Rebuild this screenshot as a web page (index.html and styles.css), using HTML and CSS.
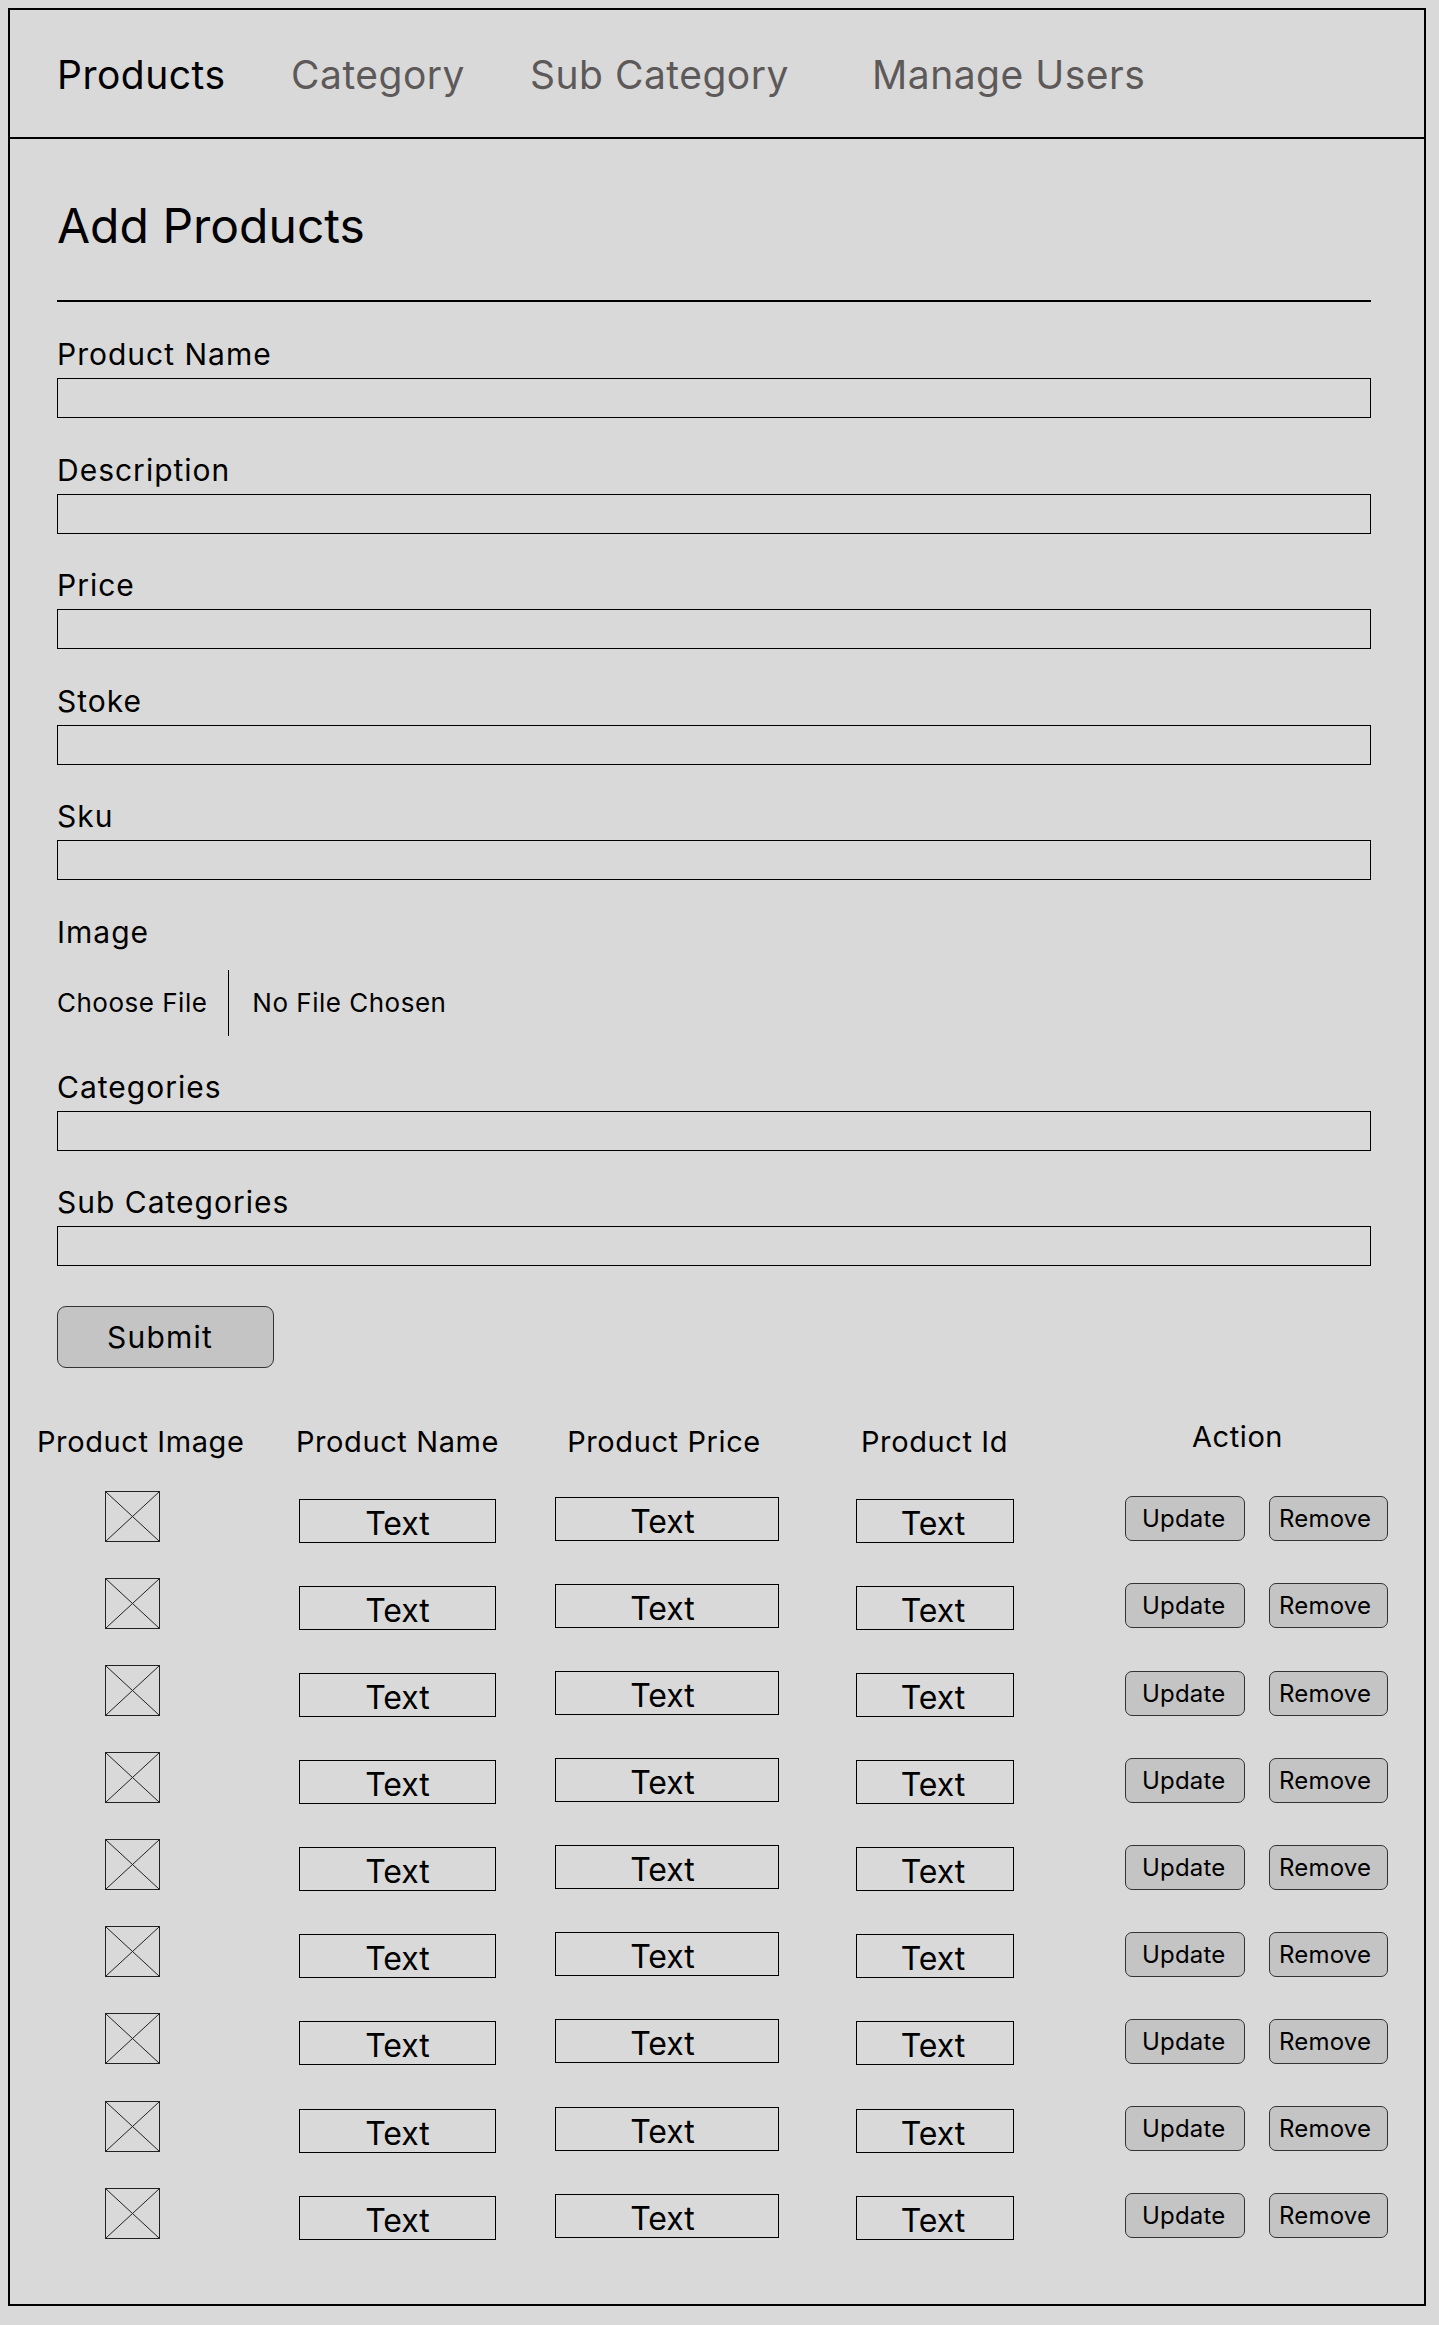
FILE: index.html
```html
<!DOCTYPE html>
<html lang="en">
<head>
<meta charset="utf-8">
<title>Add Products</title>
<link rel="stylesheet" href="styles.css">
</head>
<body>
<div class="frame">
  <nav class="nav">
    <a class="nav-item active">Products</a>
    <a class="nav-item">Category</a>
    <a class="nav-item">Sub Category</a>
    <a class="nav-item">Manage Users</a>
  </nav>

  <section class="form-section">
    <h1 class="title">Add Products</h1>
    <hr class="rule">
    <div class="field"><div class="label">Product Name</div><div class="input"></div></div>
    <div class="field"><div class="label">Description</div><div class="input"></div></div>
    <div class="field"><div class="label">Price</div><div class="input"></div></div>
    <div class="field"><div class="label">Stoke</div><div class="input"></div></div>
    <div class="field"><div class="label">Sku</div><div class="input"></div></div>
    <div class="field field-file">
      <div class="label">Image</div>
      <div class="file">
        <span class="file-btn">Choose File</span>
        <span class="file-sep"></span>
        <span class="file-name">No File Chosen</span>
      </div>
    </div>
    <div class="field"><div class="label">Categories</div><div class="input"></div></div>
    <div class="field"><div class="label">Sub Categories</div><div class="input"></div></div>
    <button class="submit">Submit</button>
  </section>

  <section class="table">
    <div class="row head">
      <div class="th">Product Image</div>
      <div class="th">Product Name</div>
      <div class="th">Product Price</div>
      <div class="th">Product Id</div>
      <div class="th th-action">Action</div>
    </div>
    <div class="row">
      <svg class="thumb" width="55" height="51" viewBox="0 0 55 51"><rect x="0.5" y="0.5" width="54" height="50" fill="none" stroke="#222"/><path d="M1 1L54 50M54 1L1 50" stroke="#222" stroke-width="1"/></svg>
      <div class="box box-name">Text</div>
      <div class="box box-price">Text</div>
      <div class="box box-id">Text</div>
      <div class="actions"><button class="btn btn-update">Update</button><button class="btn btn-remove">Remove</button></div>
    </div>
    <div class="row">
      <svg class="thumb" width="55" height="51" viewBox="0 0 55 51"><rect x="0.5" y="0.5" width="54" height="50" fill="none" stroke="#222"/><path d="M1 1L54 50M54 1L1 50" stroke="#222" stroke-width="1"/></svg>
      <div class="box box-name">Text</div>
      <div class="box box-price">Text</div>
      <div class="box box-id">Text</div>
      <div class="actions"><button class="btn btn-update">Update</button><button class="btn btn-remove">Remove</button></div>
    </div>
    <div class="row">
      <svg class="thumb" width="55" height="51" viewBox="0 0 55 51"><rect x="0.5" y="0.5" width="54" height="50" fill="none" stroke="#222"/><path d="M1 1L54 50M54 1L1 50" stroke="#222" stroke-width="1"/></svg>
      <div class="box box-name">Text</div>
      <div class="box box-price">Text</div>
      <div class="box box-id">Text</div>
      <div class="actions"><button class="btn btn-update">Update</button><button class="btn btn-remove">Remove</button></div>
    </div>
    <div class="row">
      <svg class="thumb" width="55" height="51" viewBox="0 0 55 51"><rect x="0.5" y="0.5" width="54" height="50" fill="none" stroke="#222"/><path d="M1 1L54 50M54 1L1 50" stroke="#222" stroke-width="1"/></svg>
      <div class="box box-name">Text</div>
      <div class="box box-price">Text</div>
      <div class="box box-id">Text</div>
      <div class="actions"><button class="btn btn-update">Update</button><button class="btn btn-remove">Remove</button></div>
    </div>
    <div class="row">
      <svg class="thumb" width="55" height="51" viewBox="0 0 55 51"><rect x="0.5" y="0.5" width="54" height="50" fill="none" stroke="#222"/><path d="M1 1L54 50M54 1L1 50" stroke="#222" stroke-width="1"/></svg>
      <div class="box box-name">Text</div>
      <div class="box box-price">Text</div>
      <div class="box box-id">Text</div>
      <div class="actions"><button class="btn btn-update">Update</button><button class="btn btn-remove">Remove</button></div>
    </div>
    <div class="row">
      <svg class="thumb" width="55" height="51" viewBox="0 0 55 51"><rect x="0.5" y="0.5" width="54" height="50" fill="none" stroke="#222"/><path d="M1 1L54 50M54 1L1 50" stroke="#222" stroke-width="1"/></svg>
      <div class="box box-name">Text</div>
      <div class="box box-price">Text</div>
      <div class="box box-id">Text</div>
      <div class="actions"><button class="btn btn-update">Update</button><button class="btn btn-remove">Remove</button></div>
    </div>
    <div class="row">
      <svg class="thumb" width="55" height="51" viewBox="0 0 55 51"><rect x="0.5" y="0.5" width="54" height="50" fill="none" stroke="#222"/><path d="M1 1L54 50M54 1L1 50" stroke="#222" stroke-width="1"/></svg>
      <div class="box box-name">Text</div>
      <div class="box box-price">Text</div>
      <div class="box box-id">Text</div>
      <div class="actions"><button class="btn btn-update">Update</button><button class="btn btn-remove">Remove</button></div>
    </div>
    <div class="row">
      <svg class="thumb" width="55" height="51" viewBox="0 0 55 51"><rect x="0.5" y="0.5" width="54" height="50" fill="none" stroke="#222"/><path d="M1 1L54 50M54 1L1 50" stroke="#222" stroke-width="1"/></svg>
      <div class="box box-name">Text</div>
      <div class="box box-price">Text</div>
      <div class="box box-id">Text</div>
      <div class="actions"><button class="btn btn-update">Update</button><button class="btn btn-remove">Remove</button></div>
    </div>
    <div class="row">
      <svg class="thumb" width="55" height="51" viewBox="0 0 55 51"><rect x="0.5" y="0.5" width="54" height="50" fill="none" stroke="#222"/><path d="M1 1L54 50M54 1L1 50" stroke="#222" stroke-width="1"/></svg>
      <div class="box box-name">Text</div>
      <div class="box box-price">Text</div>
      <div class="box box-id">Text</div>
      <div class="actions"><button class="btn btn-update">Update</button><button class="btn btn-remove">Remove</button></div>
    </div>
  </section>
</div>
</body>
</html>
```

FILE: styles.css
```css
* { box-sizing: border-box; }

html, body {
  background: #d9d9d9;
}

body {
  margin: 8px;
  font-family: Inter, "Noto Sans", "Liberation Sans", sans-serif;
  color: #000;
}

.frame {
  width: 1418px;
  height: 2298px;
  border: 2px solid #000;
  background: #d9d9d9;
}

/* Navigation */
.nav {
  display: grid;
  grid-template-columns: 234px 239px 342px auto;
  height: 129px;
  padding: 42px 0 0 47px;
  border-bottom: 2px solid #000;
}

.nav-item {
  font-size: 39px;
  line-height: 46px;
  letter-spacing: 0.5px;
  color: #5e5959;
  white-space: nowrap;
}

.nav-item.active {
  color: #000;
}

/* Form */
.form-section {
  padding: 58px 53px 0 47px;
}

.title {
  margin: 0;
  font-size: 48px;
  line-height: 58px;
  font-weight: 400;
}

.rule {
  margin: 45px 0 35px;
  border: 0;
  height: 2px;
  background: #000;
}

.field {
  display: flex;
  flex-direction: column;
  margin-bottom: 34.5px;
}

.label {
  font-size: 30px;
  line-height: 34px;
  letter-spacing: 1px;
  margin-bottom: 7px;
  white-space: nowrap;
}

.input {
  height: 40px;
  border: 1px solid #000;
}

.field-file .label {
  margin-bottom: 21.5px;
}

.field-file {
  margin-bottom: 33.8px;
}

.file {
  display: flex;
  align-items: center;
  height: 66px;
  font-size: 26px;
  line-height: 30px;
  letter-spacing: 0.5px;
}

.file-sep {
  align-self: stretch;
  width: 1px;
  background: #000;
  margin: 0 23px 0 21px;
}

.submit {
  display: block;
  margin-top: 40px;
  width: 217px;
  height: 62px;
  padding: 0 0 0 49px;
  text-align: left;
  font-family: inherit;
  font-size: 30px;
  letter-spacing: 1.2px;
  color: #000;
  background: #c4c4c4;
  border: 1px solid #333;
  border-radius: 9px;
}

/* Table */
.table {
  padding: 57px 0 0 27px;
}

.row {
  display: grid;
  grid-template-columns: 206px 309px 224px 317px 289px;
  height: 87.1px;
  align-items: center;
}

.row.head {
  height: 50px;
  align-items: start;
}

.th {
  font-size: 29px;
  line-height: 33px;
  letter-spacing: 0.6px;
  text-align: center;
  white-space: nowrap;
}

.th-action {
  margin-top: -5px;
}

.thumb {
  display: block;
  margin: 0 0 5px 68px;
}

.box {
  justify-self: center;
  height: 44px;
  border: 1px solid #000;
  padding-top: 6px;
  font-size: 32px;
  line-height: 36px;
  text-align: center;
}

.box-name { width: 197px; margin-top: 4px; }
.box-price { width: 224px; margin-left: 6px; padding-right: 9px; }
.box-id { width: 158px; margin-top: 4px; padding-right: 3px; }

.actions {
  display: flex;
  gap: 24px;
  margin-left: 32px;
}

.btn {
  flex-shrink: 0;
  height: 45px;
  width: 120px;
  font-family: inherit;
  font-size: 24px;
  line-height: 43px;
  letter-spacing: 0.2px;
  color: #000;
  text-align: left;
  background: #c4c4c4;
  border: 1px solid #333;
  border-radius: 7px;
}

.btn-update { padding: 0 0 0 16px; }
.btn-remove { width: 119px; padding: 0 0 0 9px; }
```
